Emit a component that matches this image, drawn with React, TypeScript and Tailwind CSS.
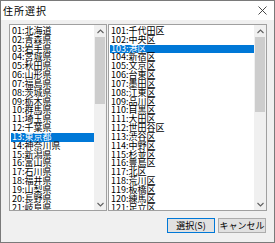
const prefs = [
  "01:北海道", "02:青森県", "03:岩手県", "04:宮城県", "05:秋田県", "06:山形県", "07:福島県",
  "08:茨城県", "09:栃木県", "10:群馬県", "11:埼玉県", "12:千葉県", "13:東京都", "14:神奈川県",
  "15:新潟県", "16:富山県", "17:石川県", "18:福井県", "19:山梨県", "20:長野県", "21:岐阜県",
];

const wards = [
  "101:千代田区", "102:中央区", "103:港区", "104:新宿区", "105:文京区", "106:台東区", "107:墨田区",
  "108:江東区", "109:品川区", "110:目黒区", "111:大田区", "112:世田谷区", "113:渋谷区", "114:中野区",
  "115:杉並区", "116:豊島区", "117:北区", "118:荒川区", "119:板橋区", "120:練馬区", "121:足立区",
];

function ListBox({ items, selected, width, thumb }: { items: string[]; selected: number; width: string; thumb: string }) {
  return (
    <div className={`flex h-[187px] border border-[#a0a0a0] bg-white ${width}`}>
      <div className="flex-1 overflow-hidden pt-[2px] pl-[1px]">
        {items.map((t, i) => (
          <div
            key={t}
            className={`h-[8.83px] pl-[1px] text-[9px] leading-[8.83px] whitespace-nowrap ${
              i === selected ? "bg-[#0078d7] text-white" : "text-black"
            }`}
          >
            {t}
          </div>
        ))}
      </div>
      <div className="flex w-[12px] flex-col bg-[#f0f0f0]">
        <div className="flex h-[12px] items-center justify-center">
          <svg width="7" height="5" viewBox="0 0 7 5">
            <path d="M0.5 4 L3.5 1 L6.5 4" fill="none" stroke="#606060" strokeWidth="1.1" />
          </svg>
        </div>
        <div className="flex-1 px-[1px]">
          <div className={`bg-[#cdcdcd] ${thumb}`} />
        </div>
        <div className="flex h-[12px] items-center justify-center">
          <svg width="7" height="5" viewBox="0 0 7 5">
            <path d="M0.5 1 L3.5 4 L6.5 1" fill="none" stroke="#606060" strokeWidth="1.1" />
          </svg>
        </div>
      </div>
    </div>
  );
}

export default function App() {
  return (
    <div
      className="flex h-[243px] w-[275px] flex-col border border-[#7a7a7a] bg-[#f0f0f0] text-black"
      style={{ fontFamily: '"Noto Sans CJK JP", "Noto Sans", sans-serif' }}
    >
      <div className="flex h-[19px] items-center justify-between bg-white pl-[2px] pr-[7px]">
        <span className="text-[10px] leading-none tracking-[1px]">住所選択</span>
        <svg width="9" height="9" viewBox="0 0 9 9">
          <path d="M0.5 0.5 L8.5 8.5 M8.5 0.5 L0.5 8.5" stroke="#333" strokeWidth="0.9" />
        </svg>
      </div>
      <div className="flex gap-[1px] pl-[8px] pt-[4px]">
        <ListBox items={prefs} selected={12} width="w-[98px]" thumb="h-[67px]" />
        <ListBox items={wards} selected={2} width="w-[159px]" thumb="h-[75px]" />
      </div>
      <div className="flex justify-end gap-[3px] pr-[8px] pt-[7px]">
        <button className="flex h-[15px] w-[48px] items-center justify-center border border-[#0078d7] bg-[#e1e1e1] text-[9px] leading-none">
          選択(S)
        </button>
        <button className="flex h-[15px] w-[48px] items-center justify-center border border-[#adadad] bg-[#e1e1e1] text-[9px] leading-none">
          キャンセル
        </button>
      </div>
    </div>
  );
}
